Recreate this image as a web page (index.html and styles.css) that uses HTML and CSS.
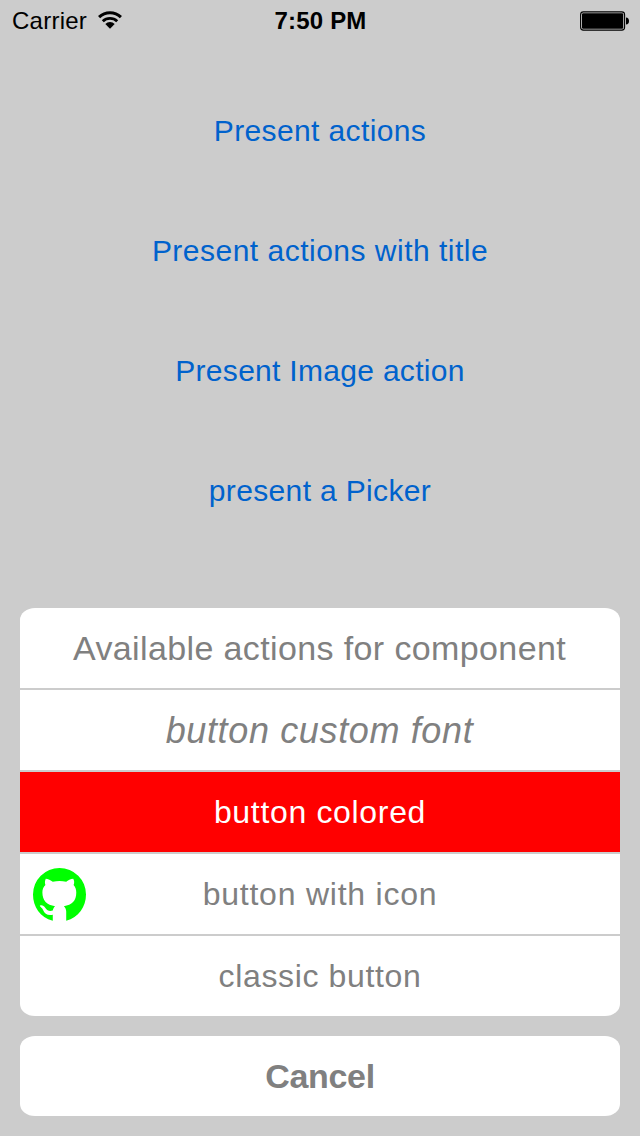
FILE: index.html
```html
<!DOCTYPE html>
<html lang="en">
<head>
<meta charset="utf-8">
<title>Actions</title>
<link rel="stylesheet" href="styles.css">
</head>
<body>
<div class="screen">
  <header class="status">
    <div class="carrier"><span class="carrier-name">Carrier</span>
      <svg class="wifi" viewBox="0 0 24 18" width="24" height="18">
        <path d="M1.1 6.1A15.8 15.8 0 0 1 22.9 6.1" fill="none" stroke="#000" stroke-width="3.1"/>
        <path d="M4.8 10.2A10.5 10.5 0 0 1 19.2 10.2" fill="none" stroke="#000" stroke-width="2.9"/>
        <path d="M12 17.8 7.3 12.9a6.6 6.6 0 0 1 9.4 0z"/>
      </svg>
    </div>
    <span class="time">7:50 PM</span>
    <div class="battery">
      <svg viewBox="0 0 50 20" width="50" height="20">
        <rect x=".6" y=".9" width="44" height="18.2" rx="2.8" fill="none" stroke="#000" stroke-width="1.1"/>
        <rect x="2" y="2.2" width="41.2" height="15.6" rx="1.2"/>
        <path d="M46 6.4c2 .2 3 1.5 3 3.6s-1 3.4-3 3.6z"/>
      </svg>
    </div>
  </header>
  <main class="links">
    <a class="link l1">Present actions</a>
    <a class="link l2">Present actions with title</a>
    <a class="link l3">Present Image action</a>
    <a class="link l4">present a Picker</a>
  </main>
  <section class="sheet">
    <div class="group">
      <div class="row title">Available actions for component</div>
      <div class="row custom">button custom font</div>
      <div class="row colored">button colored</div>
      <div class="row with-icon">
        <svg class="octocat" viewBox="39 55 158 158" width="53" height="53">
          <path fill="#0f0" d="M98 212C60 203 39 170 39 134A79 79 0 0 1 197 134C197 170 175 203 138 212V185C138 178 135 172 131 169C155 165 168 153 168 128C168 119 165 112 160 106C163 99 162 93 159 87C151 87 143 92 138 96C125 93 111 93 98 96C92 92 84 87 77 87C74 94 74 100 76 106C70 112 67 119 67 128C67 152 80 165 105 169C101 172 99 177 98 182C88 185 81 182 76 174C71 167 66 165 60 167C57 169 66 173 69 180C74 192 83 197 98 194Z"/>
        </svg>
        <span>button with icon</span>
      </div>
      <div class="row classic">classic button</div>
    </div>
    <div class="group cancel"><div class="row">Cancel</div></div>
  </section>
</div>
</body>
</html>
```
FILE: styles.css
```css
* { box-sizing: border-box; }
body { margin: 0; font-family: "Liberation Sans", Arial, sans-serif; }
.screen { width: 640px; height: 1136px; background: #ccc; display: flex; flex-direction: column; }
.status { height: 40px; padding: 2px 10px 0 12px; display: grid; grid-template-columns: 1fr auto 1fr; align-items: center; font-size: 24px; line-height: 38px; }
.carrier { display: flex; align-items: center; gap: 11px; letter-spacing: .25px; }
.wifi { margin-top: -2px; }
.time { font-weight: bold; letter-spacing: .2px; margin-left: -1px; }
.battery { display: flex; justify-content: flex-end; margin-top: -1px; }
.links { display: flex; flex-direction: column; padding-top: 31px; flex: 1; }
.link { height: 120px; line-height: 120px; text-align: center; color: #0062cc; font-size: 30px; }
.l1 { letter-spacing: .38px; }
.l2 { letter-spacing: .49px; }
.l3 { letter-spacing: .3px; }
.l4 { letter-spacing: .35px; }
.sheet { padding: 0 20px 20px; display: flex; flex-direction: column; gap: 20px; }
.group { display: flex; flex-direction: column; gap: 2px; border-radius: 15px / 12px; overflow: hidden; }
.row { height: 80px; background: #fff; color: #808080; display: flex; align-items: center; justify-content: center; font-size: 32px; line-height: 80px; white-space: pre; }
.title { font-size: 34px; letter-spacing: .38px; padding-right: 1px; }
.custom { font-size: 36px; font-style: italic; letter-spacing: .64px; padding: 2px 1px 0 0; }
.colored { background: #f00; color: #fff; letter-spacing: .67px; }
.with-icon { display: grid; grid-template-columns: 53px 1fr 53px; padding: 0 13px; text-align: center; letter-spacing: .77px; }
.octocat { margin-top: 1px; }
.classic { letter-spacing: .64px; }
.cancel .row { font-size: 34px; font-weight: bold; letter-spacing: -.3px; }
```
